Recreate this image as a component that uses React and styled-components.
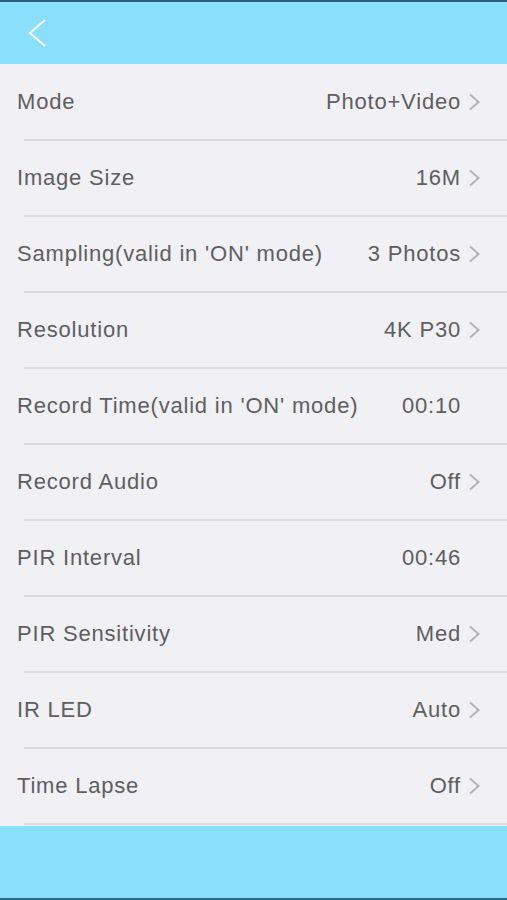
import React from "react";
import styled, { createGlobalStyle } from "styled-components";

const Global = createGlobalStyle`
  html, body { margin: 0; padding: 0; background: #f0f0f5; }
  body { font-family: "Liberation Sans", Arial, sans-serif; }
`;

const Screen = styled.div`
  width: 507px;
  height: 900px;
  display: flex;
  flex-direction: column;
  background: #f0f0f5;
  overflow: hidden;
`;

const Header = styled.header`
  height: 62px;
  flex: none;
  background: #8adffd;
  border-top: 2px solid #2c5f78;
  display: flex;
  align-items: center;
  padding-left: 26px;
`;

const BackButton = styled.button`
  border: 0;
  background: none;
  padding: 0;
  width: 24px;
  height: 30px;
  display: flex;
  align-items: center;
  cursor: pointer;
`;

const List = styled.main`
  flex: 1;
  display: flex;
  flex-direction: column;
`;

const Row = styled.div`
  height: 76px;
  flex: none;
  display: flex;
  align-items: center;
  padding-left: 17px;
  padding-right: 26px;
  position: relative;
  box-sizing: border-box;
  &::after {
    content: "";
    position: absolute;
    left: 24px;
    right: 0;
    bottom: -1px;
    height: 2px;
    background: #d9d9de;
  }
`;

const Label = styled.span`
  flex: 1;
  font-size: 22px;
  color: #5e5e62;
  white-space: nowrap;
  letter-spacing: 0.8px;
`;

const Value = styled.span`
  font-size: 22px;
  color: #5e5e62;
  white-space: nowrap;
  letter-spacing: 0.8px;
  margin-right: ${(p) => (p.$arrow ? "7px" : "20px")};
`;

const Chevron = styled.svg`
  width: 13px;
  height: 18px;
  flex: none;
`;

const Footer = styled.footer`
  height: 72px;
  flex: none;
  background: #8adffd;
  border-bottom: 2px solid #2c6a80;
`;

const rows = [
  ["Mode", "Photo+Video", true],
  ["Image Size", "16M", true],
  ["Sampling(valid in 'ON' mode)", "3 Photos", true],
  ["Resolution", "4K P30", true],
  ["Record Time(valid in 'ON' mode)", "00:10", false],
  ["Record Audio", "Off", true],
  ["PIR Interval", "00:46", false],
  ["PIR Sensitivity", "Med", true],
  ["IR LED", "Auto", true],
  ["Time Lapse", "Off", true],
];

export default function App() {
  return (
    <Screen>
      <Global />
      <Header>
        <BackButton aria-label="Back">
          <svg width="22" height="30" viewBox="0 0 22 30">
            <path d="M19 2 L4 15 L19 28" fill="none" stroke="#ffffff" strokeWidth="2" />
          </svg>
        </BackButton>
      </Header>
      <List>
        {rows.map(([label, value, arrow]) => (
          <Row key={label}>
            <Label>{label}</Label>
            <Value $arrow={arrow}>{value}</Value>
            {arrow && (
              <Chevron viewBox="0 0 13 18">
                <path d="M2 1.5 L10.5 9 L2 16.5" fill="none" stroke="#b3b3b8" strokeWidth="2" />
              </Chevron>
            )}
          </Row>
        ))}
      </List>
      <Footer />
    </Screen>
  );
}
